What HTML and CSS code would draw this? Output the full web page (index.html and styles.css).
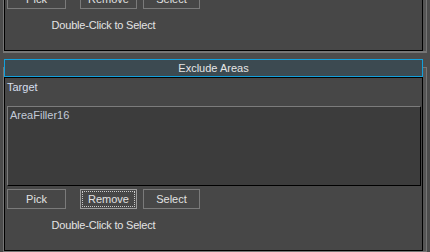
FILE: index.html
```html
<!DOCTYPE html>
<html lang="en">
<head>
    <meta charset="UTF-8"/>
    <title>Exclude Areas</title>
    <link rel="stylesheet" href="styles.css">
</head>
<body>
<div class="stack">
    <!-- upper rollout, scrolled mostly out of view -->
    <div class="rollout">
        <div class="rollout-title">Include Areas</div>
        <div class="panel">
            <div class="label">Target</div>
            <div class="listbox">
                <div class="item">AreaFiller01</div>
            </div>
            <div class="group">
                <div class="buttons">
                    <button class="btn btn-pick">Pick</button>
                    <button class="btn">Remove</button>
                    <button class="btn">Select</button>
                </div>
                <div class="hint">Double-Click to Select</div>
            </div>
        </div>
    </div>

    <!-- exclude areas -->
    <div class="rollout">
        <div class="rollout-title active">Exclude Areas</div>
        <div class="panel">
            <div class="label">Target</div>
            <div class="listbox">
                <div class="item">AreaFiller16</div>
            </div>
            <div class="group">
                <div class="buttons">
                    <button class="btn btn-pick">Pick</button>
                    <button class="btn focus">Remove</button>
                    <button class="btn">Select</button>
                </div>
                <div class="hint">Double-Click to Select</div>
            </div>
        </div>
    </div>
</div>
</body>
</html>
```

FILE: styles.css
```css
body {
    margin: 0;
    background-color: #4c4c4c;
    font-family: "Liberation Sans", Arial, sans-serif;
    font-size: 11px;
    color: #dcdcdc;
    overflow: hidden;
}

.stack {
    margin-top: -133px;
}

.rollout {
    width: 422px;
    margin-left: 3px;
    margin-bottom: 14px;
    border: 1px solid #767676;
    border-bottom-width: 2px;
    background-color: #555555;
}

.rollout-title {
    height: 16px;
    line-height: 16px;
    margin-top: -9px;
    margin-right: 3px;
    border: 1px solid #6a6a6a;
    background-color: #404040;
    text-align: center;
    color: #e6e6e6;
}

.rollout-title.active {
    border-color: #12a0dc;
    background-color: #3c4a51;
}

.panel {
    margin-right: 3px;
    border: 1px solid #000;
    background-color: #474747;
    padding-bottom: 18px;
}

.label {
    line-height: 13px;
    margin: 3px 0 0 2px;
    color: #d6dfee;
}

.listbox {
    height: 78px;
    margin: 12px 1px 0 2px;
    border-top: 1px solid #7c7c7c;
    border-left: 1px solid #7c7c7c;
    border-right: 1px solid #000;
    border-bottom: 1px solid #000;
    background-color: #3c3c3c;
}

.item {
    line-height: 13px;
    padding: 2px 0 0 2px;
    color: #c2cad8;
}

.group {
    width: 193px;
    margin: 3px 0 0 2px;
}

.buttons {
    display: flex;
    gap: 6px;
}

.btn {
    width: 57px;
    height: 20px;
    padding: 0;
    margin: 0;
    border: 1px solid #7a7a7a;
    background-color: #474747;
    color: #e2e2e2;
    font-family: inherit;
    font-size: 11px;
}

.btn-pick {
    width: 59px;
    margin-right: 8px;
}

.btn.focus {
    border-color: #9c9c9c;
    outline: 1px dotted #c8c8c8;
    outline-offset: -3px;
}

.hint {
    line-height: 13px;
    margin-top: 10px;
    text-align: center;
    letter-spacing: -0.2px;
    color: #e4e4e4;
}
```
